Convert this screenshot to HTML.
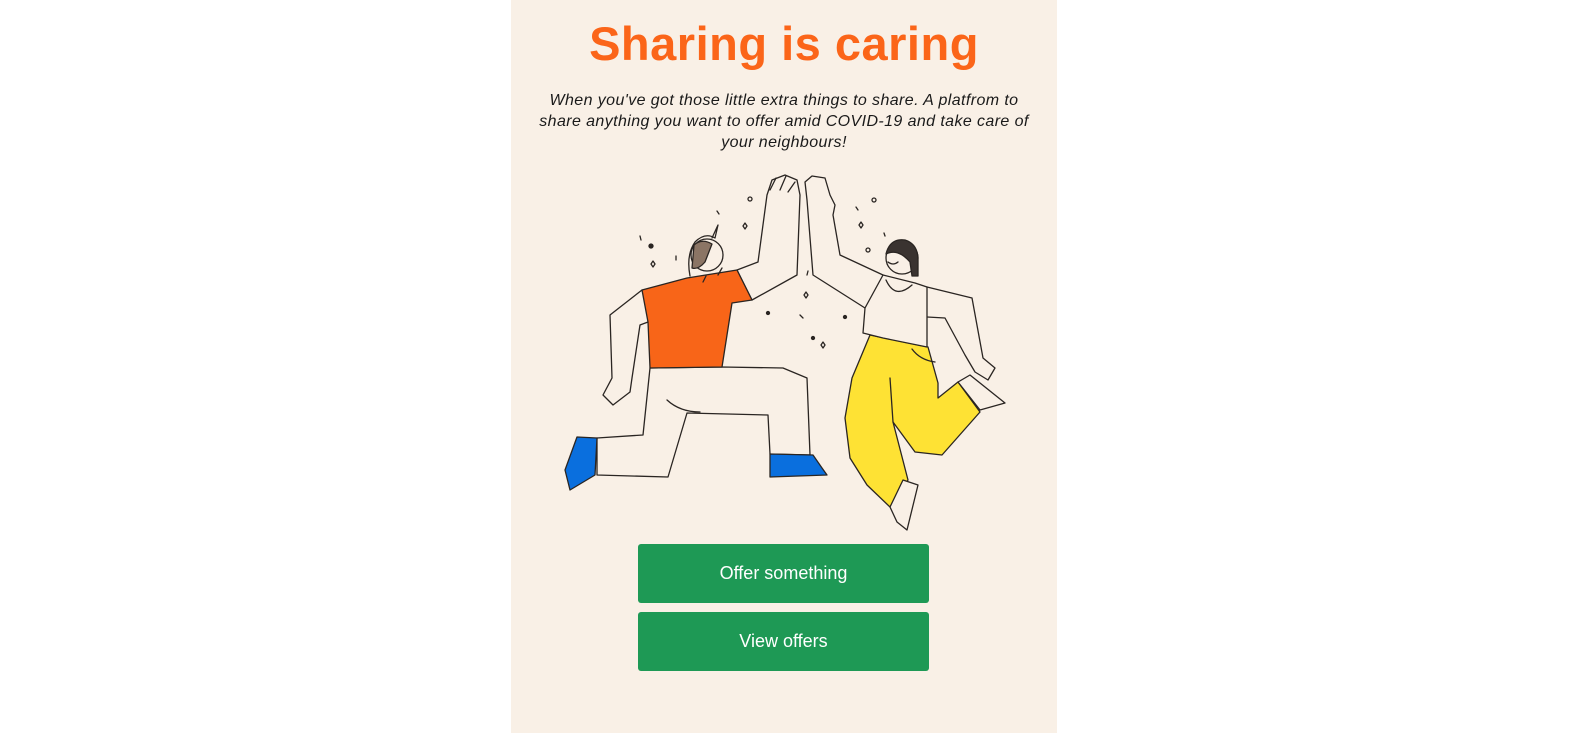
<!DOCTYPE html>
<html><head><meta charset="utf-8"><style>
html,body{margin:0;padding:0;background:#fff;width:1580px;height:733px;overflow:hidden}
.panel{position:absolute;left:511px;top:0;width:546px;height:733px;background:#f9f0e6}
h1{position:absolute;left:0;width:546px;top:16px;margin:0;text-align:center;font:bold 47px "Liberation Sans",sans-serif;color:#fb6519;letter-spacing:0.5px}
p{position:absolute;left:0;width:546px;top:90px;margin:0;text-align:center;font:italic 16px/21px "Liberation Sans",sans-serif;color:#1a1a1a;letter-spacing:0.4px}
.btn{position:absolute;left:127px;width:291px;height:59px;background:#1e9955;border-radius:3px;color:#fff;font:18px "Liberation Sans",sans-serif;text-align:center;line-height:59px}
svg{position:absolute;left:0;top:0}
</style></head><body>
<div class="panel">
<h1>Sharing is caring</h1>
<p>When you've got those little extra things to share. A platfrom to<br>share anything you want to offer amid COVID-19 and take care of<br>your neighbours!</p>
<div class="btn" style="top:544px">Offer something</div>
<div class="btn" style="top:612px">View offers</div>
</div>
<svg width="1580" height="733" viewBox="0 0 1580 733" fill="none" stroke="#2a2522" stroke-width="1.3" stroke-linejoin="round" stroke-linecap="round">
<path d="M642,290 L610,315 L612,378 L603,395 L613,405 L630,392 L632,378 L640,325 L648,322" fill="#f9f0e6"/>
<path d="M737,270 L758,262 L767,195 L772,180 L785,175 L797,180 L800,195 L797,275 L752,300 Z" fill="#f9f0e6"/>
<path d="M776,178 L770,190 M786,176 L780,190 M795,182 L788,192"/>
<path d="M650,368 L722,367 L783,368 L807,378 L810,455 L770,454 L768,415 L687,413 L668,477 L597,475 L597,438 L643,435 Z" fill="#f9f0e6"/>
<path d="M667,400 Q680,412 700,412"/>
<path d="M577,437 L597,438 L595,475 L570,490 L565,470 Z" fill="#0a6fde"/>
<path d="M770,454 L813,455 L822,468 L827,475 L770,477 Z" fill="#0a6fde"/>
<path d="M642,290 L687,278 L737,270 L752,300 L732,303 L722,367 L650,368 L648,322 Z" fill="#f86518"/>
<path d="M690,276 Q686,255 695,242 Q705,232 715,238 L718,225 L712,238" fill="#f9f0e6"/>
<circle cx="707" cy="255" r="16" fill="#f9f0e6"/>
<path d="M694,245 Q702,238 712,244 L705,262 Q698,270 692,268 Z" fill="#8b7565"/>
<path d="M706,276 L703,282 M718,275 L722,268"/>
<path d="M927,287 L972,298 L983,358 L995,368 L988,380 L975,372 L965,355 L945,318 L927,317" fill="#f9f0e6"/>
<path d="M865,308 L813,275 L807,200 L805,182 L812,176 L825,178 L830,195 L835,205 L833,215 L840,255 L883,275" fill="#f9f0e6"/>
<path d="M870,335 L928,347 L938,383 L938,398 L958,382 L980,412 L942,455 L915,452 L893,422 L908,480 L890,507 L867,485 L850,458 L845,418 L852,378 Z" fill="#fee234"/>
<path d="M890,378 L893,422 M912,349 Q920,360 935,362"/>
<path d="M890,507 L903,480 L918,485 L907,530 L897,522 Z" fill="#f9f0e6"/>
<path d="M958,382 L970,375 L1005,403 L980,410 Z" fill="#f9f0e6"/>
<path d="M883,275 L915,283 L927,287 L927,347 L883,338 L863,333 L865,308 Z" fill="#f9f0e6"/>
<path d="M886,280 Q895,300 912,285"/>
<circle cx="902" cy="258" r="16" fill="#f9f0e6"/>
<path d="M886,254 Q890,238 905,240 Q918,244 918,260 L918,276 L912,276 L910,262 Q898,248 886,254 Z" fill="#3a3330"/>
<path d="M888,262 Q893,266 898,262"/>
<g fill="#2a2522">
<circle cx="651" cy="246" r="2"/><circle cx="768" cy="313" r="1.5"/><circle cx="845" cy="317" r="1.5"/><circle cx="813" cy="338" r="1.5"/>
<circle cx="750" cy="199" r="2" fill="none"/><circle cx="874" cy="200" r="2" fill="none"/><circle cx="868" cy="250" r="2" fill="none"/>
<path d="M640,236 l1,4 M676,256 l0,4 M717,211 l2,3 M856,207 l2,3 M884,233 l1,3 M808,271 l-1,4 M800,315 l3,3"/>
<path d="M653,261 l2,3 l-2,3 l-2,-3 Z M745,223 l2,3 l-2,3 l-2,-3 Z M861,222 l2,3 l-2,3 l-2,-3 Z M806,292 l2,3 l-2,3 l-2,-3 Z M823,342 l2,3 l-2,3 l-2,-3 Z" fill="none"/>
</g>
</svg>
</body></html>
